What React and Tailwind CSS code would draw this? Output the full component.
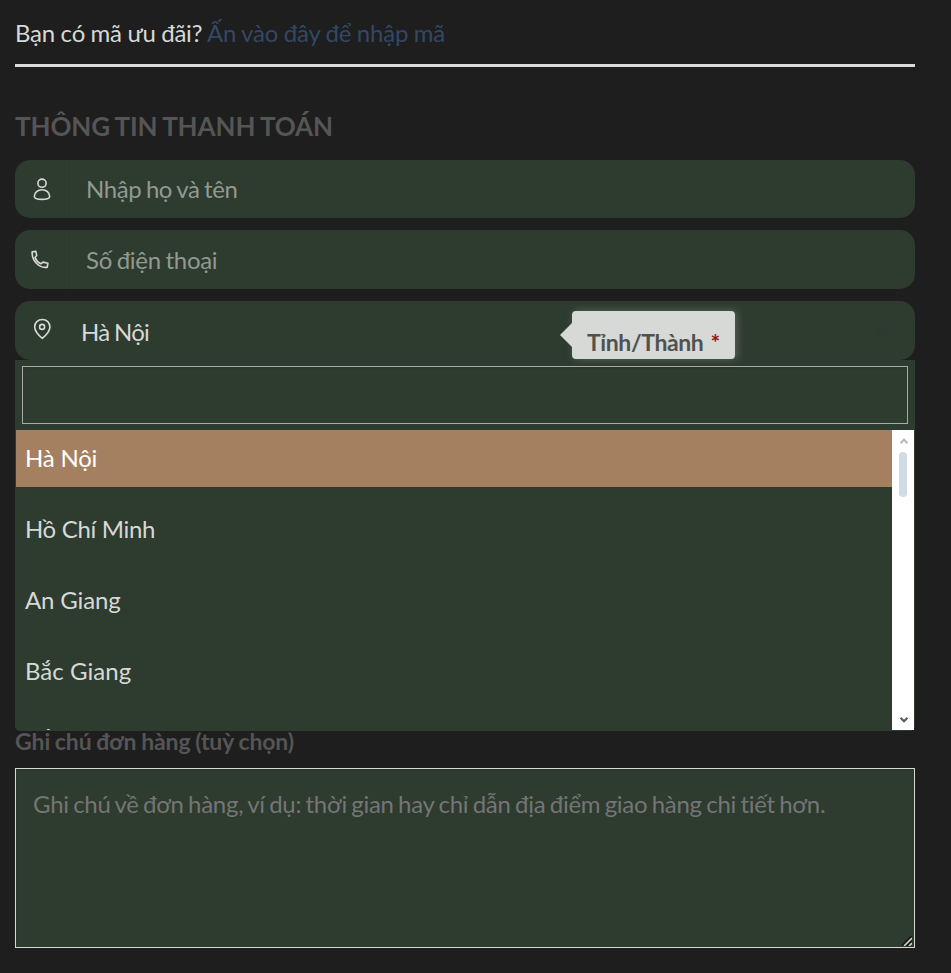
const provinces = [
  { name: 'Hà Nội', style: 'pb-[2px] tracking-[-0.2px] bg-[#a58060] text-white' },
  { name: 'Hồ Chí Minh', style: 'pb-[2px] tracking-[-0.33px]' },
  { name: 'An Giang', style: 'pb-[2px] tracking-[-0.15px]' },
  { name: 'Bắc Giang', style: 'pb-[2px] tracking-[0.05px]' },
  { name: 'Bắc Kạn', style: 'pb-[5px]' },
];

const FIELD = 'flex items-center rounded-[15px] bg-[#2e3b2f]';

function UserIcon() {
  return (
    <svg className="ml-[18px] h-[24px] w-[18px] shrink-0" viewBox="0 0 18 24" fill="none" stroke="#d6d9d6" strokeWidth="1.600">
      <circle cx="9" cy="6.2" r="4.1" />
      <path d="M9 12.700c-4.400 0-7.500 3-7.700 6.800 0 1.700 3 2.900 7.700 2.900s7.700-1.200 7.700-2.900C16.500 15.700 13.400 12.700 9 12.700Z" />
    </svg>
  );
}

function PhoneIcon() {
  return (
    <svg className="ml-[16px] h-[20px] w-[18px] shrink-0" viewBox="0 0 18 20" fill="none" stroke="#d6d9d6" strokeWidth="1.600" strokeLinejoin="round">
      <path d="M1.200 1.700 4.800 1.400 5.700 5.400 4 7.600C5.200 10.600 7.200 12.600 9.900 13.800L12 12.100 16.900 13.200 16.300 17.200C8.500 18.600 .6 11.200 1.200 1.700Z" />
    </svg>
  );
}

function PinIcon() {
  return (
    <svg className="mb-[3px] ml-[18px] h-[22px] w-[18px] shrink-0" viewBox="0 0 18 22" fill="none" stroke="#d6d9d6" strokeWidth="1.600">
      <path d="M9.300 1.500C4.900 1.500 1.700 4.600 1.700 8.900c0 4.500 5 9.200 7.600 11.400 2.600-2.200 7.600-6.900 7.600-11.400 0-4.300-3.200-7.400-7.600-7.400Z" />
      <circle cx="9.100" cy="8.900" r="2.500" />
    </svg>
  );
}

function LabelBubble() {
  return (
    <div className="absolute left-[557px] top-[10px] flex h-[48px] w-[163px] items-start rounded-[4px] bg-[#d6d9d6] pl-[15px] pt-[13px] text-[23px] font-bold leading-[36px] tracking-[-0.4px] text-[#505250] shadow-[2px_0_8px_#7b7f7b99]">
      <svg className="absolute -left-[12px] top-[11px] h-[26px] w-[12px]" viewBox="0 0 12 26">
        <path d="M12 1 0 13l12 12Z" fill="#d6d9d6" />
      </svg>
      Tỉnh/Thành<span className="ml-[7px] text-[#981414]">*</span>
    </div>
  );
}

function Scrollbar() {
  return (
    <div className="mr-px flex h-[300px] w-[22px] shrink-0 flex-col items-center bg-white">
      <svg className="ml-px mt-[8px] h-[6px] w-[8px]" viewBox="0 0 8 6" fill="none" stroke="#b9b9b9" strokeWidth="2.200">
        <path d="M.5 5.200 4 1.700l3.500 3.500" />
      </svg>
      <div className="mt-[8px] h-[45px] w-[8px] rounded-full bg-[#d0dbe3]" />
      <svg className="mb-[7px] ml-px mt-auto h-[6px] w-[8px]" viewBox="0 0 8 6" fill="none" stroke="#5a5a5a" strokeWidth="2.200">
        <path d="M.5.800 4 4.300 7.500.8" />
      </svg>
    </div>
  );
}

export default function App() {
  return (
    <div className="flex h-[973px] w-[951px] flex-col overflow-hidden bg-[#1e1e1e] pl-[15px] pr-[36px] font-[Lato,sans-serif] text-[24px] text-[#d6d9d6]">
      <div className="flex h-[67px] shrink-0 items-start border-b-[3px] border-[#d9dcd9] pt-[15px] leading-[36px]">
        <p className="whitespace-pre tracking-[-0.2px] [word-spacing:-0.4px]">
          Bạn có mã ưu đãi? <a className="text-[#334866]">Ấn vào đây để nhập mã</a>
        </p>
      </div>

      <h3 className="mt-[41px] h-[52px] shrink-0 whitespace-nowrap text-[26px] font-bold leading-[36px] tracking-[-0.12px] text-[#555] [word-spacing:-0.8px]">THÔNG TIN THANH TOÁN</h3>

      <div className={`${FIELD} h-[58px] shrink-0`}>
        <UserIcon />
        <div className="ml-[18px] flex h-full items-center whitespace-nowrap border-l border-[#2c382d] pl-[16px] tracking-[-0.43px] text-[#919a91] [word-spacing:-1px]">Nhập họ và tên</div>
      </div>
      <div className={`${FIELD} mt-[12px] h-[59px] shrink-0`}>
        <PhoneIcon />
        <div className="ml-[20px] flex h-full items-center whitespace-nowrap border-l border-[#2c382d] pl-[16px] pt-px tracking-[-0.32px] text-[#919a91] [word-spacing:-1px]">Số điện thoại</div>
      </div>
      <div className={`${FIELD} relative mt-[12px] h-[59px] shrink-0`}>
        <PinIcon />
        <div className="ml-[30px] pt-[2px] tracking-[-0.7px] [word-spacing:-1px]">Hà Nội</div>
        <LabelBubble />
        <svg className="ml-auto mr-[24px] h-[10px] w-[16px]" viewBox="0 0 16 10" fill="none" stroke="#353536" strokeWidth="2">
          <path d="m1.500 1.500 6.500 6.500 6.500-6.500" />
        </svg>
      </div>

      <div className="flex h-[371px] shrink-0 flex-col rounded-b-[5px] bg-[#2e3b2f]">
        <div className="mx-[7px] mt-[6px] h-[58px] shrink-0 border border-[#aaa] shadow-[inset_0_1px_2px_#0000001a]" />
        <div className="mt-[6px] flex h-[300px] overflow-hidden pl-px">
          <ul className="flex grow flex-col gap-[14px] overflow-hidden">
            {provinces.map(({ name, style }) => (
              <li key={name} className={`flex h-[57px] shrink-0 items-center pl-[9px] ${style}`}>
                {name}
              </li>
            ))}
          </ul>
          <Scrollbar />
        </div>
      </div>

      <label className="h-[37px] shrink-0 whitespace-nowrap text-[23px] font-bold leading-[20px] tracking-[-0.12px] text-[#555] [word-spacing:-0.7px]">Ghi chú đơn hàng (tuỳ chọn)</label>
      <div className="flex h-[180px] shrink-0 border border-[#d6d9d6] bg-[#2e3b2f] shadow-[inset_0_1px_2px_#0000001a]">
        <p className="whitespace-nowrap pl-[17px] pt-[17px] leading-[36px] tracking-[-0.28px] text-[#757575] [word-spacing:-1.45px]">
          Ghi chú về đơn hàng, ví dụ: thời gian hay chỉ dẫn địa điểm giao hàng chi tiết hơn.
        </p>
        <svg className="mb-[1px] ml-auto mr-[2px] mt-auto h-[10px] w-[10px] shrink-0" viewBox="0 0 10 10" fill="none">
          <path d="M0 10 10 0M5 10l5-5" stroke="#151915" strokeWidth="2" />
          <path d="M2 10 10 2M7 10l3-3" stroke="#d0d0d0" strokeWidth="1.600" />
        </svg>
      </div>
    </div>
  );
}
